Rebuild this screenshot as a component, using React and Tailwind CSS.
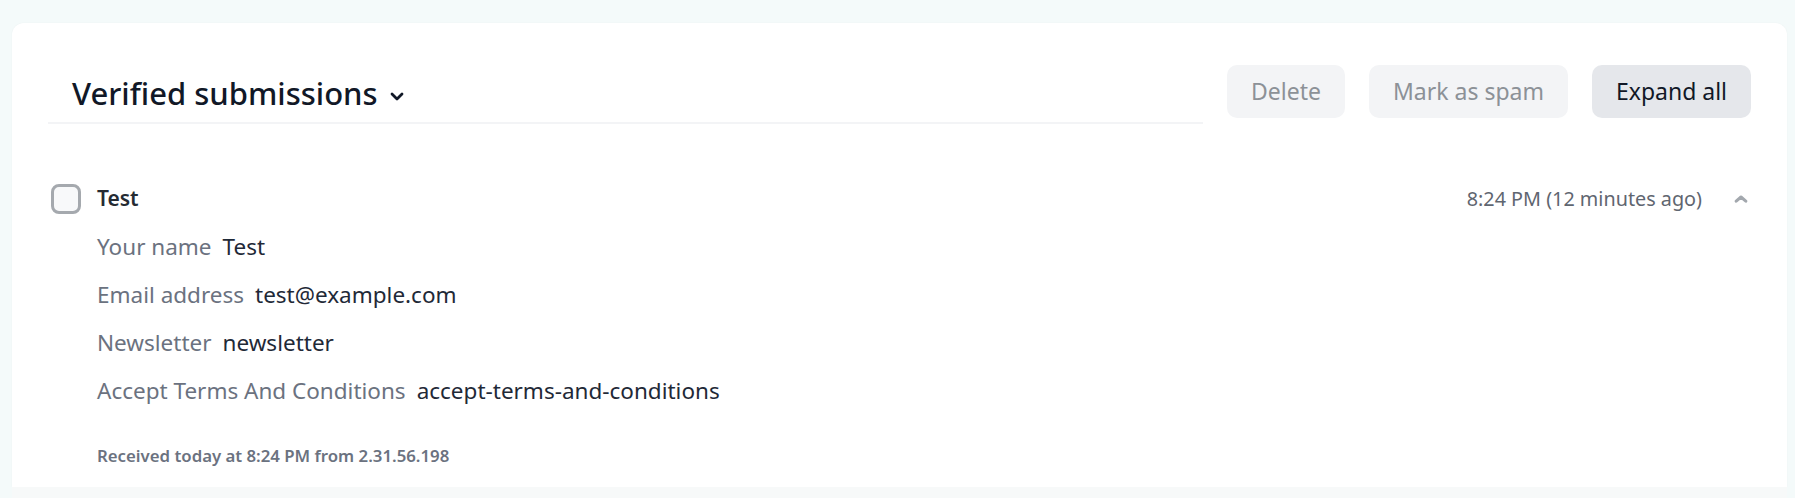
import React from "react";

const fields = [
  { label: "Your name", value: "Test" },
  { label: "Email address", value: "test@example.com" },
  { label: "Newsletter", value: "newsletter" },
  { label: "Accept Terms And Conditions", value: "accept-terms-and-conditions" },
];

const ChevronDown = () => (
  <svg width="14" height="9" viewBox="0 0 14 9" fill="none">
    <path d="M2 2l5 5 5-5" stroke="currentColor" strokeWidth="2.8" strokeLinecap="round" strokeLinejoin="round" />
  </svg>
);

const ChevronUp = () => (
  <svg width="14" height="8" viewBox="0 0 14 8" fill="none">
    <path d="M2.2 6.2l4.8-4.2 4.8 4.2" stroke="currentColor" strokeWidth="3" strokeLinecap="round" strokeLinejoin="round" />
  </svg>
);

const App = () => {
  return (
    <div className="min-h-screen bg-[#f4fafa] pl-[12px] pr-[8px] pt-[23px] font-['Noto_Sans',sans-serif]">
      <div className="h-[464px] rounded-t-[12px] bg-white shadow-[0_0_2px_rgba(0,0,0,0.04)]">
        {/* header */}
        <div className="flex items-start gap-6 px-9 pt-[42px]">
          <div className="flex h-[59px] flex-1 items-center border-b-2 border-[#f3f4f6] pl-6">
            <h1 className="text-[31px] font-medium leading-none text-[#111827]">Verified submissions</h1>
            <span className="ml-[12px] mt-[5px] text-[#111827]">
              <ChevronDown />
            </span>
          </div>
          <div className="flex gap-6">
            <button className="h-[53px] w-[118px] rounded-[10px] bg-[#f3f4f6] text-[23px] text-[#8c9197]">
              Delete
            </button>
            <button className="h-[53px] w-[199px] rounded-[10px] bg-[#f3f4f6] text-[23px] text-[#8c9197]">
              Mark as spam
            </button>
            <button className="h-[53px] w-[159px] rounded-[10px] bg-[#e5e7eb] text-[23px] text-[#111827]">
              Expand all
            </button>
          </div>
        </div>

        {/* submission */}
        <div className="mt-[51px] px-[39px]">
          <div className="flex h-[48px] items-center">
            <span className="h-[30px] w-[30px] rounded-[8px] border-[3px] border-[#a5a9ae] bg-[#f8f9fa]" />
            <span className="ml-4 text-[21px] font-semibold text-[#252b33]">Test</span>
            <span className="ml-auto text-[19.8px] text-[#5f6670]">8:24 PM (12 minutes ago)</span>
            <span className="ml-[32px] text-[#a3a8ae]">
              <ChevronUp />
            </span>
          </div>
          {fields.map((f) => (
            <div key={f.label} className="flex h-[48px] items-center pl-[46px] text-[22.5px]">
              <span className="text-[#6b7280]">{f.label}</span>
              <span className="ml-[11px] text-[#1f2937]">{f.value}</span>
            </div>
          ))}
          <div className="mt-[17px] flex h-[48px] items-center pl-[46px] text-[16.8px] font-semibold text-[#6b7280]">
            Received today at 8:24 PM from 2.31.56.198
          </div>
        </div>
      </div>
      <div className="h-[11px] bg-[#f7f9f9]" />
    </div>
  );
};

export default App;
